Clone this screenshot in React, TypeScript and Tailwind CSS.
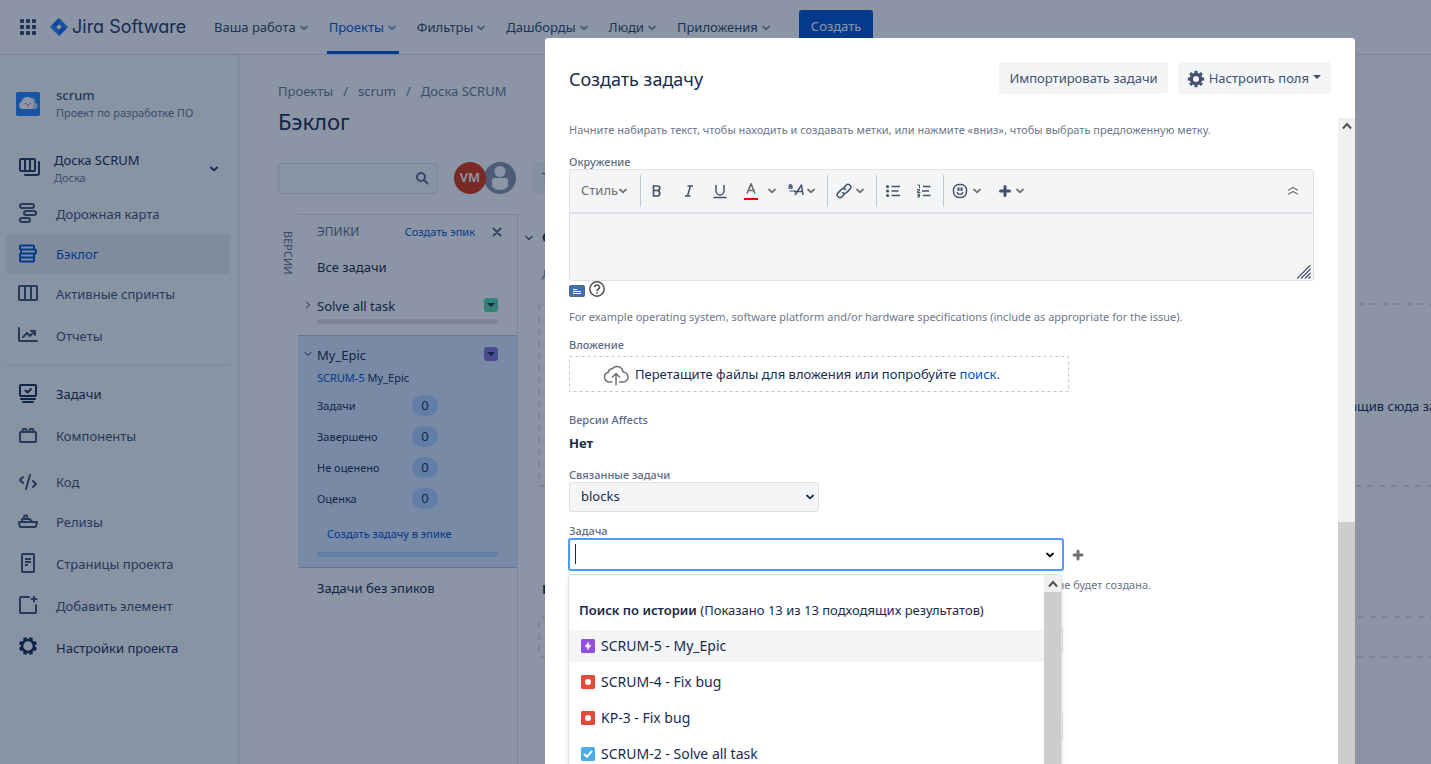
import type { ReactNode } from "react";

type IconProps = { children: ReactNode; className?: string; size?: number; sw?: number };

function Svg({ children, className = "", size = 24, sw = 2 }: IconProps) {
  return (
    <svg
      aria-hidden="true"
      width={size}
      height={size}
      viewBox={`0 0 ${size} ${size}`}
      fill="none"
      stroke="currentColor"
      strokeWidth={sw}
      strokeLinecap="round"
      strokeLinejoin="round"
      className={`shrink-0 ${className}`}
    >
      {children}
    </svg>
  );
}

function Chevron({ className = "" }: { className?: string }) {
  return (
    <Svg size={10} sw={1.8} className={className}>
      <path d="M2 3.500 5 6.300l3-2.800" />
    </Svg>
  );
}

const gearTeeth = [0, 45, 90, 135, 180, 225, 270, 315];

function Gear({ className = "" }: { className?: string }) {
  return (
    <Svg size={18} sw={3.2} className={className}>
      <circle cx="9" cy="9" r="4.600" />
      {gearTeeth.map((a) => (
        <path key={a} d="M9 .800v2.500" strokeLinecap="butt" transform={`rotate(${a} 9 9)`} />
      ))}
    </Svg>
  );
}

const icons = {
  roadmap: (
    <Svg>
      <rect x="4" y="2" width="14" height="4" rx="2" />
      <rect x="8" y="9" width="12" height="4" rx="2" />
      <rect x="4" y="16" width="10" height="4" rx="2" />
    </Svg>
  ),
  backlog: (
    <Svg>
      <path d="M5 3.500h12a1 1 0 0 1 1 1v3H5l-1-1v-2a1 1 0 0 1 1-1ZM5 7.500h14a1 1 0 0 1 1 1v2a1 1 0 0 1-1 1H6a1 1 0 0 1-1-1v-3M5 11.500h13v4H5a1 1 0 0 1-1-1v-2a1 1 0 0 1 1-1ZM5 15.500h13v3a1 1 0 0 1-1 1H5a1 1 0 0 1-1-1v-2a1 1 0 0 1 1-1Z" />
    </Svg>
  ),
  sprints: (
    <Svg>
      <rect x="3" y="4" width="18" height="14" rx="1" />
      <path d="M9 4v14M15 4v14" />
    </Svg>
  ),
  reports: (
    <Svg>
      <path d="M3 4v12a1 1 0 0 0 1 1h17M7 13l4-4 3 3 5-5M15 7h4v4" />
    </Svg>
  ),
  issues: (
    <Svg>
      <rect x="4" y="3" width="16" height="11" rx="1" />
      <path d="m9.500 8.500 2 2 3.500-3.500M5 17h14M7 20h10" />
    </Svg>
  ),
  components: (
    <Svg>
      <rect x="4" y="8" width="16" height="10" rx="1" />
      <path d="M6.500 8V6a1 1 0 0 1 1-1h2a1 1 0 0 1 1 1v2M13.500 8V6a1 1 0 0 1 1-1h2a1 1 0 0 1 1 1v2" />
    </Svg>
  ),
  code: (
    <Svg>
      <path d="m7 7-3 3 3 3M17 11l3 3-3 3M14 5l-4 14" />
    </Svg>
  ),
  releases: (
    <Svg>
      <path d="M3 12h18l-1 4a1 1 0 0 1-1 1H4.500l-1-1L3 12ZM6 11V9h8l2 3M8 8.500V6.500a1 1 0 0 1 1-1h2V8" />
    </Svg>
  ),
  pages: (
    <Svg>
      <rect x="6" y="2" width="12" height="18" rx="1" />
      <path d="M9 7h6M9 10h6M9 13h3" strokeLinecap="butt" />
    </Svg>
  ),
  add: (
    <Svg>
      <path d="M13 3H5a1 1 0 0 0-1 1v14a1 1 0 0 0 1 1h14a1 1 0 0 0 1-1v-7M18 2.500v5M15.500 5h5" />
    </Svg>
  ),
  settings: (
    <Svg className="-mt-1">
      <circle cx="12" cy="12" r="6" strokeWidth="2.600" />
      {gearTeeth.map((a) => (
        <path key={a} d="M12 3v2.500" strokeWidth="3.600" strokeLinecap="butt" transform={`rotate(${a + 22.5} 12 12)`} />
      ))}
    </Svg>
  ),
};

type NavRow = { icon: keyof typeof icons; label: string; tone: string };

const boardNav: NavRow[] = [
  { icon: "roadmap", label: "Дорожная карта", tone: "text-[#42526e]" },
  { icon: "backlog", label: "Бэклог", tone: "bg-[#ebecf0] text-[#0052cc]" },
  { icon: "sprints", label: "Активные спринты", tone: "text-[#42526e]" },
];
const projectNav: NavRow[] = [
  { icon: "issues", label: "Задачи", tone: "text-[#172b4d]" },
  { icon: "components", label: "Компоненты", tone: "text-[#42526e]" },
];
const moreNav: NavRow[] = [
  { icon: "releases", label: "Релизы", tone: "text-[#42526e]" },
  { icon: "pages", label: "Страницы проекта", tone: "text-[#42526e]" },
  { icon: "add", label: "Добавить элемент", tone: "text-[#42526e]" },
  { icon: "settings", label: "Настройки проекта", tone: "text-[#172b4d]" },
];

function SideLink({ icon, label, tone }: NavRow) {
  return (
    <a href="#" className={`flex h-10 items-center gap-4 rounded-[3px] pl-2.5 text-[13px] ${tone}`}>
      {icons[icon]}
      <span className="pt-0.5">{label}</span>
    </a>
  );
}

function Sidebar() {
  return (
    <aside className="w-60 shrink-0 border-r-2 border-[#ebecf0] bg-[#fafbfc] pr-2 pl-1.5">
      <div className="flex items-center gap-4 pt-[31px] pl-2.5">
        <svg width="24" height="24" viewBox="0 0 24 24" aria-hidden="true" className="shrink-0">
          <rect width="24" height="24" rx="2" fill="#2684ff" />
          <path d="M6 17a4 4 0 0 1-.5-7.500A6 5.500 0 0 1 15 6a4.500 4.500 0 0 1 3.500 5A3 3 0 0 1 18 17Z" fill="#fff" />
          <path d="M16 5.500a4 4 0 0 1 3 5.500 3 3 0 0 1-1 6h-2q3-3 0-11.500Z" fill="#cfd6e2" />
          <path d="M9.500 11v1M14 11v1" stroke="#42526e" strokeWidth="1" />
          <path d="M10.500 12.500h2.500l-1.200 2Z" fill="#de350b" />
        </svg>
        <div>
          <div className="text-[13px] leading-[18px] font-medium text-[#42526e]">scrum</div>
          <div className="text-[11px] leading-[18px] text-[#6b778c]">Проект по разработке ПО</div>
        </div>
      </div>
      <button type="button" className="mt-[29px] flex w-full items-center gap-3.5 pl-2.5 text-left">
        <Svg className="-mt-1 text-[#253858]">
          <rect x="4" y="4" width="15" height="12" rx="1" />
          <path d="M9 4v12M14 4v12M23 7v11a2 2 0 0 1-2 2H9" />
        </Svg>
        <span className="flex-1">
          <span className="block text-[13px] leading-[18px] text-[#172b4d]">Доска SCRUM</span>
          <span className="block text-[11px] leading-[18px] text-[#6b778c]">Доска</span>
        </span>
        <Chevron className="mr-[11px] text-[#172b4d]" />
      </button>
      <nav className="mt-[7px]">
        {boardNav.map((r) => (
          <SideLink key={r.label} {...r} />
        ))}
        <div className="mt-0.5">
          <SideLink icon="reports" label="Отчеты" tone="text-[#42526e]" />
        </div>
        <hr className="my-2 border-t-2 border-[#ebecf0]" />
        <div className="flex flex-col gap-0.5">
          {projectNav.map((r) => (
            <SideLink key={r.label} {...r} />
          ))}
        </div>
        <div className="mt-1.5">
          <SideLink icon="code" label="Код" tone="text-[#42526e]" />
        </div>
        <div className="flex flex-col gap-0.5">
          {moreNav.map((r) => (
            <SideLink key={r.label} {...r} />
          ))}
        </div>
      </nav>
    </aside>
  );
}

const topNav = ["Ваша работа", "Проекты", "Фильтры", "Дашборды", "Люди", "Приложения"];

function TopBar() {
  return (
    <header className="flex h-[55px] shrink-0 border-b border-[#dfe1e6] bg-white pl-4">
      <div className="flex w-[198px] shrink-0 items-center gap-2.5 pb-px">
        <button type="button" aria-label="Приложения" className="p-1 text-[#344563]">
          <svg width="16" height="16" viewBox="0 0 16 16" fill="currentColor" aria-hidden="true">
            {[0, 6, 12].map((y) => [0, 6, 12].map((x) => <rect key={`${x}-${y}`} x={x} y={y} width="4" height="4" rx="1" />))}
          </svg>
        </button>
        <a href="#" className="flex items-center gap-1 text-[#253858]">
          <svg width="18" height="18" viewBox="0 0 18 18" aria-hidden="true">
            <path d="M9 0 18 9 9 18 0 9Z" fill="#2684ff" />
            <path d="M9 0v6.500L6.500 9 2 7Z" fill="#1868e0" />
            <path d="M9 18v-6.500L11.500 9 16 11Z" fill="#1868e0" />
            <path d="M9 6.200 11.800 9 9 11.800 6.200 9Z" fill="#fff" />
          </svg>
          <span className="font-['Inter',sans-serif] text-lg whitespace-nowrap [font-feature-settings:'cv11']">Jira Software</span>
        </a>
      </div>
      <nav className="flex gap-5 text-[13px] text-[#344563]">
        {topNav.map((label) => (
          <button
            key={label}
            type="button"
            className={
              label === "Проекты"
                ? "-mx-0.5 flex items-center gap-[3px] border-b-[3px] border-[#0052cc] px-0.5 pt-1 whitespace-nowrap text-[#0052cc]"
                : "flex items-center gap-[3px] pt-px whitespace-nowrap"
            }
          >
            {label}
            <Chevron className="opacity-60" />
          </button>
        ))}
      </nav>
      <button type="button" className="mt-2.5 ml-7 h-8 rounded-[3px] bg-[#0052cc] px-3 pt-0.5 text-[13px] text-white">
        Создать
      </button>
    </header>
  );
}

const epicStats = ["Задачи", "Завершено", "Не оценено", "Оценка"];

function EpicMenu({ tone, label }: { tone: string; label: string }) {
  return (
    <button type="button" aria-label={label} className={`-mt-1 flex size-3.5 items-center justify-center rounded-[3px] text-[#172b4d] ${tone}`}>
      <svg width="8" height="4" viewBox="0 0 8 4" fill="currentColor" aria-hidden="true">
        <path d="M0 0h8L4 4Z" />
      </svg>
    </button>
  );
}

function EpicsPanel() {
  return (
    <section className="flex w-[220px] shrink-0 flex-col border-t border-r border-[#dfe1e6] text-[13px] text-[#172b4d]">
      <div className="flex h-[34px] items-center pr-3.5 pl-[19px]">
        <h2 className="flex-1 text-xs text-[#5e6c84]">ЭПИКИ</h2>
        <a href="#" className="text-[11px] text-[#0052cc]">Создать эпик</a>
        <button type="button" aria-label="Закрыть" className="ml-4 text-[#5e6c84]">
          <Svg size={12} sw={2}>
            <path d="m2.500 2.500 7 7M9.500 2.500l-7 7" />
          </Svg>
        </button>
      </div>
      <div className="mt-2 h-[30px] pl-[19px] leading-5">Все задачи</div>
      <div className="flex h-[49px] flex-col border-b border-[#c1c7d0] pt-2.5 pr-[19px] pl-[5px]">
        <div className="flex h-5 items-center">
          <Svg size={10} sw={1} className="mr-1 -mt-1">
            <path d="m3.500 2 3 3-3 3" />
          </Svg>
          <span className="flex-1">Solve all task</span>
          <EpicMenu tone="bg-[#57d9a3]" label="Меню Solve all task" />
        </div>
        <div className="mt-0.5 ml-3.5 h-[5px] rounded-full bg-[#dfe1e6]" />
      </div>
      <div className="flex h-[232px] flex-col border-b border-[#b3c3e0] bg-[#deebff] pt-3 pr-[19px] pl-[5px]">
        <div className="flex h-4 items-center">
          <Svg size={10} sw={1} className="mr-1 -mt-1">
            <path d="m2 3.500 3 3 3-3" />
          </Svg>
          <span className="flex-1">My_Epic</span>
          <EpicMenu tone="bg-[#8777d9]" label="Меню My_Epic" />
        </div>
        <div className="mt-[5px] pl-3.5 text-[11px] leading-[18px]">
          <a href="#" className="text-[#0052cc]">SCRUM-5</a> My_Epic
        </div>
        <dl className="mt-2 flex flex-col gap-2.5 pl-3.5 text-[11px]">
          {epicStats.map((s) => (
            <div key={s} className="flex h-[21px] items-center">
              <dt className="w-[95px] leading-4">{s}</dt>
              <dd className="w-[26px] rounded-full bg-[#b3d4ff] text-center text-[13px] leading-[21px]">0</dd>
            </div>
          ))}
        </dl>
        <a href="#" className="mt-4 ml-6 text-[11px] leading-[18px] text-[#0052cc]">Создать задачу в эпике</a>
        <div className="mt-[9px] ml-3.5 h-[5px] shrink-0 rounded-full bg-[#b3d4ff]" />
      </div>
      <div className="pt-2.5 pl-[19px] leading-5">Задачи без эпиков</div>
    </section>
  );
}

function Dashed({ className, children }: { className: string; children?: ReactNode }) {
  return (
    <div className={`relative ${className}`}>
      <svg className="absolute inset-0 size-full overflow-visible" aria-hidden="true">
        <rect x="1" y="1" width="100%" height="100%" rx="3" fill="none" stroke="#dfe1e6" strokeWidth="2" strokeDasharray="6 6" />
      </svg>
      {children}
    </div>
  );
}

function Backlog() {
  return (
    <main className="flex min-w-0 flex-1 flex-col overflow-hidden bg-white pl-[38px]">
      <nav className="flex gap-2.5 pt-[26px] text-[13px] leading-5 text-[#6b778c]">
        <a href="#">Проекты</a>
        <span>/</span>
        <a href="#">scrum</a>
        <span>/</span>
        <a href="#">Доска SCRUM</a>
      </nav>
      <h1 className="mt-1 text-[22px] leading-8 text-[#172b4d]">Бэклог</h1>
      <div className="mt-[25px] flex h-8 items-center">
        <label className="flex h-[31px] w-40 shrink-0 items-center rounded-[3px] border border-[#dfe1e6] bg-[#fafbfc] pr-2">
          <input type="text" aria-label="Поиск" className="min-w-0 flex-1 outline-none" />
          <Svg size={14} sw={2} className="text-[#5e6c84]">
            <circle cx="6" cy="6" r="4" />
            <path d="m9 9 3.500 3.500" />
          </Svg>
        </label>
        <span className="z-10 ml-4 flex size-8 shrink-0 items-center justify-center rounded-full bg-[#de350b] text-[13px] font-semibold text-white">VM</span>
        <svg width="32" height="32" viewBox="0 0 32 32" aria-hidden="true" className="-ml-0.5 shrink-0">
          <circle cx="16" cy="16" r="16" fill="#8993a4" />
          <circle cx="16" cy="9.500" r="5.500" fill="#fff" />
          <path d="M8 18.500a2.500 2.500 0 0 1 2.500-2.500h11a2.500 2.500 0 0 1 2.500 2.500v6q-3 3.500-8 3.500t-8-3.500Z" fill="#fff" />
        </svg>
        <button type="button" className="ml-4 h-8 rounded-[3px] bg-[#f4f5f7] px-2.5 text-[13px] text-[#42526e]">Тип</button>
      </div>
      <div className="mt-5 flex min-h-0 flex-1">
        <div className="w-5 shrink-0 pt-[17px] text-[11px] leading-5 text-[#5e6c84] [writing-mode:vertical-rl]">ВЕРСИИ</div>
        <EpicsPanel />
        <div className="min-w-0 flex-1 pl-1.5 text-[13px] text-[#172b4d]">
          <div className="flex items-center gap-2 pt-3.5">
            <Svg size={10} sw={1.5} className="opacity-70">
              <path d="m2 3.500 3 3 3-3" />
            </Svg>
            <h3 className="font-bold">Спринт SCRUM 1</h3>
          </div>
          <div className="mt-4 pl-[18px] text-[11px] leading-5 text-[#6b778c]">Добавить цель</div>
          <Dashed className="mt-[19px] ml-3.5 h-[182px]">
            <p className="absolute top-[94px] left-[633px] whitespace-nowrap">Запланируйте спринт, перетащив сюда задачи</p>
          </Dashed>
          <h3 className="mt-[94px] pl-[18px] leading-5 font-bold">Бэклог</h3>
          <Dashed className="mt-[17px] ml-3.5 h-10" />
        </div>
      </div>
    </main>
  );
}

function Tool({ label, children, className = "" }: { label: string; children: ReactNode; className?: string }) {
  return (
    <button type="button" aria-label={label} className={`flex h-8 shrink-0 items-center justify-center ${className}`}>
      {children}
    </button>
  );
}

function Editor() {
  return (
    <div className="flex h-28 w-[745px] max-w-full flex-col rounded-[3px] border border-[#dfe1e6] bg-[#f4f5f7]">
      <div className="flex h-11 items-center border-b-2 border-[#dfe1e6] text-[#42526e]">
        <button type="button" className="flex h-8 w-[71px] shrink-0 items-center border-r border-[#c1c7d0] pl-[11px] text-[13px] text-[#707070]">
          Стиль
          <Chevron />
        </button>
        <Tool label="Полужирный" className="w-8">
          <Svg size={16} sw={1.7}>
            <path d="M4.500 3v10h4a2.800 2.800 0 0 0 0-5.500h-4h4a2.200 2.200 0 0 0 0-4.500Z" strokeLinejoin="miter" />
          </Svg>
        </Tool>
        <Tool label="Курсив" className="w-[31px]">
          <Svg size={16} sw={1.5}>
            <path d="M6.500 3H12M4 13h5.500M9.500 3 6.500 13" strokeLinecap="butt" />
          </Svg>
        </Tool>
        <Tool label="Подчеркнутый" className="w-8">
          <Svg size={16} sw={1.5}>
            <path d="M4 2v6a4 4 0 0 0 8 0V2M1.500 14.500h13" strokeLinecap="butt" />
          </Svg>
        </Tool>
        <Tool label="Цвет текста" className="w-12 gap-2 text-[#707070]">
          <Svg size={16} sw={1.7} className="overflow-visible">
            <path d="M4 10.500 8 .800l4 9.700M5.500 7.500h5" strokeLinecap="butt" />
            <path d="M1 16h14" stroke="#f00000" strokeWidth="2" strokeLinecap="butt" />
          </Svg>
          <Chevron />
        </Tool>
        <Tool label="Форматирование" className="w-[43px] gap-px pr-2">
          <Svg size={18} sw={1.5}>
            <path d="M8 13 14.500 3l1.500 10M7 9.500h9" strokeLinecap="butt" />
            <path d="M2 3.500c1-1.200 3-1 3 .5v2.500M5 4.500c-2-.2-3.200.2-3.200 1S4.500 7 5 5.200M3 9h5" strokeWidth="1.200" />
          </Svg>
          <Chevron className="text-[#707070]" />
        </Tool>
        <Tool label="Ссылка" className="w-[49px] gap-[3px] border-l border-[#c1c7d0] pr-1">
          <Svg size={16} sw={1.5}>
            <path d="M7 5.500 10 2.300a2.700 2.700 0 0 1 4 3.800l-3.500 3.500a2.700 2.700 0 0 1-4 0M9 10.500l-3 3.200a2.700 2.700 0 0 1-4-3.800l3.500-3.500a2.700 2.700 0 0 1 4 0" />
          </Svg>
          <Chevron className="text-[#707070]" />
        </Tool>
        <Tool label="Маркированный список" className="w-[33px] border-l border-[#c1c7d0]">
          <Svg size={16} sw={1.300}>
            <path d="M6.500 3.500h8.500M6.500 8h7M6.500 12.500h8.500" strokeLinecap="butt" />
            <path d="M2.500 3.500h.1M2.500 8h.1M2.500 12.500h.1" strokeWidth="3" />
          </Svg>
        </Tool>
        <Tool label="Нумерованный список" className="mr-1 w-[30px]">
          <Svg size={16} sw={1.300}>
            <path d="M7 3.500h7.500M6 8h7M7 12.500h7.500" strokeLinecap="butt" />
            <path d="M2 2h1.500v3M1.500 6.500h2v1.500h-2v1.500h2.500M1.500 11h2v3h-2M2 12.500h1.500" strokeWidth="1" />
          </Svg>
        </Tool>
        <Tool label="Эмодзи" className="w-[46px] gap-1 border-l border-[#c1c7d0]">
          <Svg size={16} sw={1.400}>
            <rect x="1.500" y="1.500" width="13" height="13" rx="5.500" />
            <path d="M5.200 9.500a3 3 0 0 0 5.600 0" />
            <path d="M6.500 4.500V8M9.500 4.500V8" strokeWidth="2" strokeLinecap="butt" />
          </Svg>
          <Chevron className="text-[#707070]" />
        </Tool>
        <Tool label="Вставить" className="w-11 gap-0.5">
          <Svg size={16} sw={3}>
            <path d="M8 3.500v9M3.500 8h9" />
          </Svg>
          <Chevron className="text-[#707070]" />
        </Tool>
        <Tool label="Свернуть" className="mr-3 ml-auto w-4 text-[#707070]">
          <Svg size={12} sw={1.300}>
            <path d="m1.500 5 4.500-2.500L10.500 5M1.500 9l4.500-2.500L10.500 9" />
          </Svg>
        </Tool>
      </div>
      <textarea id="environment" className="min-h-0 w-full flex-1 resize-none bg-transparent px-2 text-[13px] outline-none" />
      <div className="flex h-0 justify-end">
        <svg width="14" height="14" viewBox="0 0 14 14" stroke="#42526e" strokeWidth="1.200" aria-hidden="true" className="mr-0.5 -mt-[15px]">
          <path d="M0 13.500 13.500 0M4 13.500l9.500-9.500M8 13.500l5.500-5.500M11.500 13.500l2-2" />
        </svg>
      </div>
    </div>
  );
}

function EpicIcon() {
  return (
    <svg width="14" height="14" viewBox="0 0 14 14" aria-hidden="true">
      <rect width="14" height="14" rx="1.500" fill="#904ee2" />
      <path d="M7.500 3v3.200H10L6.500 11V7.800H4Z" fill="#fff" stroke="#fff" strokeWidth=".5" strokeLinejoin="round" />
    </svg>
  );
}
function BugIcon() {
  return (
    <svg width="14" height="14" viewBox="0 0 14 14" aria-hidden="true">
      <rect width="14" height="14" rx="1.500" fill="#e5493a" />
      <circle cx="7" cy="7" r="3" fill="#fff" />
    </svg>
  );
}
function TaskIcon() {
  return (
    <svg width="14" height="14" viewBox="0 0 14 14" aria-hidden="true">
      <rect width="14" height="14" rx="1.500" fill="#4bade8" />
      <path d="m3.500 7.500 2.300 2.300L10.500 4.500" fill="none" stroke="#fff" strokeWidth="2" strokeLinecap="round" strokeLinejoin="round" />
    </svg>
  );
}

const suggestions = [
  { icon: <EpicIcon />, label: "SCRUM-5 - My_Epic", row: "bg-[#f4f5f7]" },
  { icon: <BugIcon />, label: "SCRUM-4 - Fix bug", row: "" },
  { icon: <BugIcon />, label: "KP-3 - Fix bug", row: "" },
  { icon: <TaskIcon />, label: "SCRUM-2 - Solve all task", row: "" },
];

function ScrollArrow() {
  return (
    <Svg size={10} sw={2} className="mx-auto mt-[3px] text-[#505050]">
      <path d="M1 7.500 5 3l4 4.500" strokeLinecap="butt" strokeLinejoin="miter" />
    </Svg>
  );
}

function IssuePicker() {
  return (
    <div className="relative -ml-px flex w-[496px] max-w-full">
      <div className="relative h-[33px] flex-1 rounded-[3px] border-2 border-[#4c9aff] bg-white">
        <input id="issue" type="text" className="size-full px-1.5 text-[13px] outline-none" />
        <span className="absolute top-1 left-[5px] h-5 w-px bg-[#172b4d]" />
        <Chevron className="absolute top-2.5 right-[7px] text-black" />
      </div>
      <button type="button" aria-label="Добавить" className="absolute top-[11px] -right-5 text-[#707070]">
        <Svg size={12} sw={3}>
          <path d="M6 2v8M2 6h8" />
        </Svg>
      </button>
      <div className="absolute top-full left-0 z-10 mt-[3px] flex h-[260px] w-[494px] rounded-[3px] border border-[#dfe1e6] bg-white shadow-md">
        <div className="min-w-0 flex-1 pt-[25px] text-[#172b4d]">
          <div className="px-2.5 pb-[9px] text-[13px] leading-[21px] whitespace-nowrap">
            <span className="font-semibold">Поиск по истории</span> (Показано 13 из 13 подходящих результатов)
          </div>
          <ul className="flex flex-col gap-1 text-sm">
            {suggestions.map((s) => (
              <li key={s.label} className={`flex h-8 items-center gap-1.5 pl-3 ${s.row}`}>
                {s.icon}
                {s.label}
              </li>
            ))}
          </ul>
        </div>
        <div className="w-[17px] bg-[#cdcdcd]">
          <div className="h-[17px] bg-[#f0f0f0] pt-px">
            <ScrollArrow />
          </div>
        </div>
      </div>
    </div>
  );
}

const labelClass = "block text-[11px] leading-[15px] font-medium text-[#5e6c84]";
const hintClass = "text-[11px] leading-4 whitespace-nowrap text-[#6b778c]";

function CreateDialog() {
  return (
    <div role="dialog" aria-modal="true" aria-labelledby="dialog-title" className="flex h-full w-[810px] max-w-full flex-col rounded-t-[3px] bg-white text-[#172b4d]">
      <div className="flex h-20 shrink-0 items-center gap-2.5 pr-6 pl-6">
        <h2 id="dialog-title" className="flex-1 pt-0.5 text-lg">Создать задачу</h2>
        <button type="button" className="h-8 rounded-[3px] bg-[#f4f5f7] px-2.5 pt-0.5 text-[13px] text-[#42526e]">Импортировать задачи</button>
        <button type="button" className="flex h-8 items-center gap-1 rounded-[3px] bg-[#f4f5f7] pt-0.5 pr-2.5 pl-[9px] text-[13px] text-[#42526e]">
          <Gear />
          Настроить поля
          <svg width="8" height="4" viewBox="0 0 8 4" fill="currentColor" aria-hidden="true" className="-mt-1">
            <path d="M0 0h8L4 4Z" />
          </svg>
        </button>
      </div>
      <div className="flex min-h-0 flex-1">
        <form className="min-w-0 flex-1 overflow-hidden pt-1 pl-6">
          <p className={hintClass}>Начните набирать текст, чтобы находить и создавать метки, или нажмите «вниз», чтобы выбрать предложенную метку.</p>
          <label htmlFor="environment" className={`mt-4 ${labelClass}`}>Окружение</label>
          <Editor />
          <div className="flex h-5 items-center gap-1">
            <svg width="16" height="12" viewBox="0 0 16 12" aria-hidden="true">
              <rect x=".5" y=".5" width="15" height="11" rx="1" fill="#3b73af" stroke="#59657a" />
              <path d="M4 4.500h4M4 6.500h8M4 8.500h8" stroke="#fff" strokeWidth="1" />
            </svg>
            <svg width="16" height="16" viewBox="0 0 16 16" fill="none" stroke="#505050" strokeWidth="1.500" aria-hidden="true" className="-mt-1">
              <circle cx="8" cy="8" r="7.200" />
              <path d="M5.500 6.300a2.500 2.300 0 1 1 3.600 2C8.200 8.700 8 9 8 10M8 11v1.500" />
            </svg>
          </div>
          <p className={`mt-2 ${hintClass}`}>For example operating system, software platform and/or hardware specifications (include as appropriate for the issue).</p>
          <span className={`mt-3 ${labelClass}`}>Вложение</span>
          <div className="relative mt-1 flex h-9 w-[500px] max-w-full items-center gap-1.5 pt-0.5 pl-[34px] text-[13px]">
            <svg className="absolute inset-0 size-full" aria-hidden="true">
              <rect x=".5" y=".5" width="499" height="35" fill="none" stroke="#c4c4c4" strokeDasharray="3 3" />
            </svg>
            <svg width="26" height="22" viewBox="0 0 26 22" fill="none" stroke="#707070" strokeWidth="1.500" strokeLinecap="round" strokeLinejoin="round" aria-hidden="true">
              <path d="M9 18H6.500a5 5 0 0 1-1.300-9.800A5 5 0 0 1 9.500 4.500a6 6 0 0 1 10.500 3.500 5 5 0 0 1 0 10h-3.500M13 21V9.500M9.500 13 13 9.500l3.500 3.500" />
            </svg>
            <span className="whitespace-nowrap">
              Перетащите файлы для вложения или попробуйте <a href="#" className="text-[#0052cc]">поиск.</a>
            </span>
          </div>
          <span className={`mt-5 ${labelClass}`}>Версии Affects</span>
          <div className="mt-1.5 text-[13px] leading-5 font-bold">Нет</div>
          <label htmlFor="link-type" className={`mt-3.5 ${labelClass}`}>Связанные задачи</label>
          <div className="relative w-[250px]">
            <select id="link-type" defaultValue="blocks" className="block h-[30px] w-full appearance-none rounded-[3px] border border-[#dfe1e6] bg-[#f4f5f7] pl-[11px] text-[13px]">
              <option>blocks</option>
            </select>
            <Chevron className="pointer-events-none absolute top-2.5 right-1" />
          </div>
          <label htmlFor="issue" className={`mt-[11px] ${labelClass}`}>Задача</label>
          <IssuePicker />
          <div className="mt-1.5 flex w-[582px] justify-end overflow-hidden">
            <p className={hintClass}>Начните вводить текст для поиска задач. Если поле не заполнено, связь не будет создана.</p>
          </div>
          <input type="text" aria-label="Исполнитель" className="mt-[31px] block h-8 w-[494px] rounded-[3px] border border-[#dfe1e6] bg-[#f4f5f7]" />
          <input type="text" aria-label="Ссылка на эпик" className="mt-[55px] block h-8 w-[494px] rounded-[3px] border border-[#dfe1e6] bg-[#f4f5f7]" />
        </form>
        <div className="flex w-[17px] shrink-0 flex-col bg-[#f0f0f0]">
          <ScrollArrow />
          <div className="mt-[391px] flex-1 bg-[#cdcdcd]" />
        </div>
      </div>
    </div>
  );
}

export default function App() {
  return (
    <div className="relative flex h-screen flex-col overflow-hidden bg-white font-['Noto_Sans','Open_Sans',sans-serif]">
      <TopBar />
      <div className="flex min-h-0 flex-1">
        <Sidebar />
        <Backlog />
      </div>
      <div className="absolute inset-0 z-20 flex justify-end bg-[#091e42]/47 pt-[38px] pr-[76px]">
        <CreateDialog />
      </div>
    </div>
  );
}
